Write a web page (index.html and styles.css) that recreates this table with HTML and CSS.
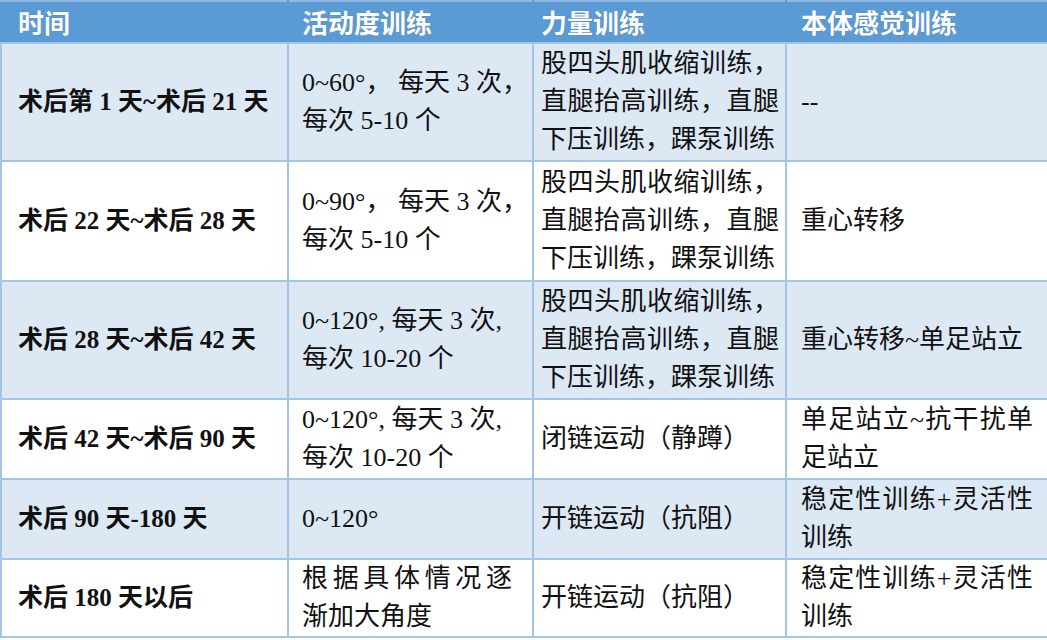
FILE: index.html
```html
<!DOCTYPE html>
<html lang="zh-CN">
<head>
<meta charset="utf-8">
<title>术后训练计划</title>
<link rel="stylesheet" href="styles.css">
</head>
<body>
<table class="plan">
  <colgroup>
    <col class="c1"><col class="c2"><col class="c3"><col class="c4">
  </colgroup>
  <thead>
    <tr class="head">
      <th class="p1">时间</th>
      <th class="p2">活动度训练</th>
      <th class="p3">力量训练</th>
      <th class="p4">本体感觉训练</th>
    </tr>
  </thead>
  <tbody>
    <tr class="r-tall alt">
      <td class="p1 label">术后第 1 天~术后 21 天</td>
      <td class="p2"><span class="ln">0~60°，&nbsp;每天 3 次，</span><span class="ln">每次 5-10 个</span></td>
      <td class="p3"><span class="jl">股四头肌收缩训练，</span><span class="jl">直腿抬高训练，直腿</span>下压训练，踝泵训练</td>
      <td class="p4">--</td>
    </tr>
    <tr class="r-tall r-mid">
      <td class="p1 label">术后 22 天~术后 28 天</td>
      <td class="p2"><span class="ln">0~90°，&nbsp;每天 3 次，</span><span class="ln">每次 5-10 个</span></td>
      <td class="p3"><span class="jl">股四头肌收缩训练，</span><span class="jl">直腿抬高训练，直腿</span>下压训练，踝泵训练</td>
      <td class="p4">重心转移</td>
    </tr>
    <tr class="r-tall alt">
      <td class="p1 label">术后 28 天~术后 42 天</td>
      <td class="p2"><span class="ln">0~120°, 每天 3 次,</span><span class="ln">每次 10-20 个</span></td>
      <td class="p3"><span class="jl">股四头肌收缩训练，</span><span class="jl">直腿抬高训练，直腿</span>下压训练，踝泵训练</td>
      <td class="p4">重心转移~单足站立</td>
    </tr>
    <tr class="r-short">
      <td class="p1 label">术后 42 天~术后 90 天</td>
      <td class="p2"><span class="ln">0~120°, 每天 3 次,</span><span class="ln">每次 10-20 个</span></td>
      <td class="p3">闭链运动（静蹲）</td>
      <td class="p4"><span class="jl">单足站立~抗干扰单</span>足站立</td>
    </tr>
    <tr class="r-short alt">
      <td class="p1 label">术后 90 天-180 天</td>
      <td class="p2">0~120°</td>
      <td class="p3">开链运动（抗阻）</td>
      <td class="p4"><span class="jl">稳定性训练+灵活性</span>训练</td>
    </tr>
    <tr class="r-short r-last">
      <td class="p1 label">术后 180 天以后</td>
      <td class="p2"><span class="jl narrow">根据具体情况逐</span>渐加大角度</td>
      <td class="p3">开链运动（抗阻）</td>
      <td class="p4"><span class="jl">稳定性训练+灵活性</span>训练</td>
    </tr>
  </tbody>
</table>
</body>
</html>
```

FILE: styles.css
```css
html, body {
  margin: 0;
  padding: 0;
  background: #ffffff;
}

.plan {
  width: 1047px;
  table-layout: fixed;
  border-collapse: collapse;
  font-family: "Liberation Serif", "Noto Sans CJK SC", serif;
  font-size: 26px;
  color: #111111;
}

.c1 { width: 287px; }
.c2 { width: 245px; }
.c3 { width: 253px; }
.c4 { width: 262px; }

.plan th,
.plan td {
  border: 2px solid #a3c4e4;
  vertical-align: middle;
  text-align: left;
  line-height: 38px;
  padding-top: 0;
  padding-bottom: 0;
  padding-right: 4px;
}

.plan th {
  height: 40px;
  background: #5b9bd5;
  color: #ffffff;
  font-family: "Noto Sans CJK SC", sans-serif;
  font-weight: 700;
  font-size: 26px;
  line-height: 40px;
  border-color: #5b9bd5;
  border-top: 2px solid #8fb8e2;
  border-bottom: 2px solid #a3c4e4;
  text-shadow: 0 0 1px rgba(0, 0, 0, 0.25);
}

.p1 { padding-left: 16px; }
.p2 { padding-left: 13px; }
.p3 { padding-left: 7px; }
.p4 { padding-left: 14px; }

.plan td.p3 { padding-right: 6px; }
.plan td.p4 { padding-right: 14px; }

.label {
  font-weight: 700;
  font-size: 25px;
}

.alt td {
  background: #dde8f5;
}

.r-tall td { height: 116px; }
.r-mid td { height: 118px; }
.r-short td { height: 78px; }
.r-last td { height: 76px; }

.ln {
  display: block;
  white-space: nowrap;
}

.jl {
  display: block;
  text-align: justify;
  text-align-last: justify;
}

.jl.narrow {
  margin-right: 16px;
}
```
